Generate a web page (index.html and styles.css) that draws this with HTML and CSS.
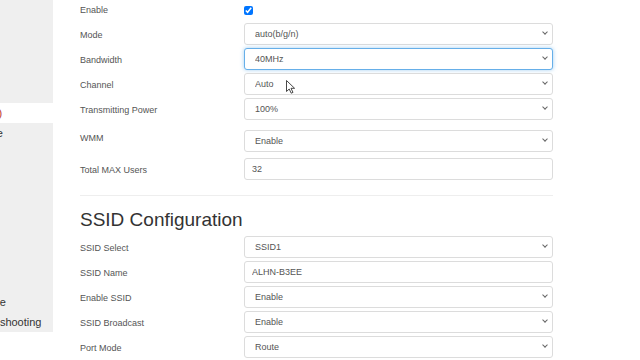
FILE: index.html
```html
<!DOCTYPE html>
<html lang="en">
<head>
  <meta charset="UTF-8" />
  <meta name="viewport" content="width=device-width, initial-scale=1.0"/>
  <title>Wireless Settings</title>
  <link rel="stylesheet" href="styles.css">
</head>
<body>
  <div class="page">
    <!-- side menu (scrolled off to the left) -->
    <aside class="sidebar">
      <ul class="nav">
        <li>Status</li>
        <li>LAN</li>
        <li>WAN</li>
        <li>VoIP</li>
        <li>Time</li>
        <li class="active">SSID(0)</li>
        <li>Manage</li>
        <li>USB</li>
        <li>DDNS</li>
        <li>Log</li>
        <li>NAT</li>
        <li>QoS</li>
        <li>DMZ</li>
        <li>UPnP</li>
        <li class="gap">Advance</li>
        <li>Troubleshooting</li>
      </ul>
    </aside>

    <main class="content">
      <div class="field field-check">
        <label for="enable">Enable</label>
        <input type="checkbox" id="enable" checked>
      </div>

      <div class="field">
        <label for="mode">Mode</label>
        <div class="select">
          <select id="mode" class="control"><option>auto(b/g/n)</option></select>
        </div>
      </div>

      <div class="field">
        <label for="bandwidth">Bandwidth</label>
        <div class="select">
          <select id="bandwidth" class="control focused"><option>40MHz</option></select>
        </div>
      </div>

      <div class="field">
        <label for="channel">Channel</label>
        <div class="select">
          <select id="channel" class="control"><option>Auto</option></select>
        </div>
      </div>

      <div class="field">
        <label for="power">Transmitting Power</label>
        <div class="select">
          <select id="power" class="control"><option>100%</option></select>
        </div>
      </div>

      <div class="field field-wmm">
        <label for="wmm">WMM</label>
        <div class="select">
          <select id="wmm" class="control"><option>Enable</option></select>
        </div>
      </div>

      <div class="field field-users">
        <label for="users">Total MAX Users</label>
        <input type="text" id="users" class="control" value="32">
      </div>

      <hr class="divider">

      <h2>SSID Configuration</h2>

      <div class="field">
        <label for="ssid">SSID Select</label>
        <div class="select">
          <select id="ssid" class="control"><option>SSID1</option></select>
        </div>
      </div>

      <div class="field">
        <label for="ssidName">SSID Name</label>
        <input type="text" id="ssidName" class="control" value="ALHN-B3EE">
      </div>

      <div class="field">
        <label for="ssidEnable">Enable SSID</label>
        <div class="select">
          <select id="ssidEnable" class="control"><option>Enable</option></select>
        </div>
      </div>

      <div class="field">
        <label for="broadcast">SSID Broadcast</label>
        <div class="select">
          <select id="broadcast" class="control"><option>Enable</option></select>
        </div>
      </div>

      <div class="field">
        <label for="portMode">Port Mode</label>
        <div class="select">
          <select id="portMode" class="control"><option>Route</option></select>
        </div>
      </div>
    </main>
  </div>

  <!-- mouse pointer -->
  <svg class="cursor" width="11" height="15" viewBox="0 0 11 15">
    <path d="M0.5 0.5 L0.5 11.5 L3.2 9 L5.2 13.2 L7 12.4 L5 8.3 L8.6 8.3 Z" fill="#fff" stroke="#333" stroke-width="0.9" stroke-linejoin="round"/>
  </svg>
</body>
</html>
```

FILE: styles.css
```css
body {
  margin: 0;
  font-family: "Liberation Sans", Arial, sans-serif;
  background: #fff;
  overflow: hidden;
  position: relative;
}
.page {
  display: flex;
  align-items: flex-start;
}
.sidebar {
  width: 53px;
  flex: none;
  height: 332px;
  background: #efefef;
  overflow: hidden;
}
.nav {
  list-style: none;
  margin: 0 0 0 -37px;
  padding: 3px 0 0;
  width: 120px;
  font-size: 11px;
  color: #333;
}
.nav li {
  height: 20px;
  line-height: 20px;
  white-space: nowrap;
}
.nav li.active {
  background: #fff;
  color: #b8362b;
}
.nav li.gap {
  margin-top: 9px;
}
.content {
  width: 473px;
  padding-left: 27px;
}
.field {
  display: flex;
  align-items: center;
  margin-bottom: 3px;
}
.field label {
  width: 164px;
  flex: none;
  padding-top: 2px;
  font-size: 9px;
  line-height: 12px;
  color: #555;
}
.field-check {
  height: 20px;
}
.field-check label {
  padding-top: 0;
}
.field-check input {
  width: 9px;
  height: 9px;
  margin: 0;
}
.field-wmm {
  margin-top: 10px;
}
.field-wmm label {
  align-self: flex-start;
}
.field-users {
  margin-top: 6px;
}
.select {
  position: relative;
}
.select::after {
  content: "";
  position: absolute;
  right: 6px;
  top: 7px;
  width: 3px;
  height: 3px;
  border-right: 1.3px solid #666;
  border-bottom: 1.3px solid #666;
  transform: rotate(45deg);
}
.control {
  display: block;
  width: 309px;
  height: 22px;
  box-sizing: border-box;
  border: 1px solid #dcdcdc;
  border-radius: 3px;
  background: #fff;
  font-family: "Liberation Sans", Arial, sans-serif;
  font-size: 9px;
  color: #555;
  outline: none;
}
select.control {
  appearance: none;
  padding: 0 0 0 10px;
}
input.control {
  padding: 0 0 0 7px;
}
.control.focused {
  border-color: #66afe9;
  box-shadow: 0 0 4px rgba(102, 175, 233, 0.6);
}
.divider {
  border: 0;
  border-top: 1px solid #eee;
  margin: 15px 0 0;
}
h2 {
  margin: 13px 0 5px;
  font-size: 19px;
  line-height: 22px;
  font-weight: normal;
  color: #333;
}
.cursor {
  position: absolute;
  left: 286px;
  top: 80px;
}
```
